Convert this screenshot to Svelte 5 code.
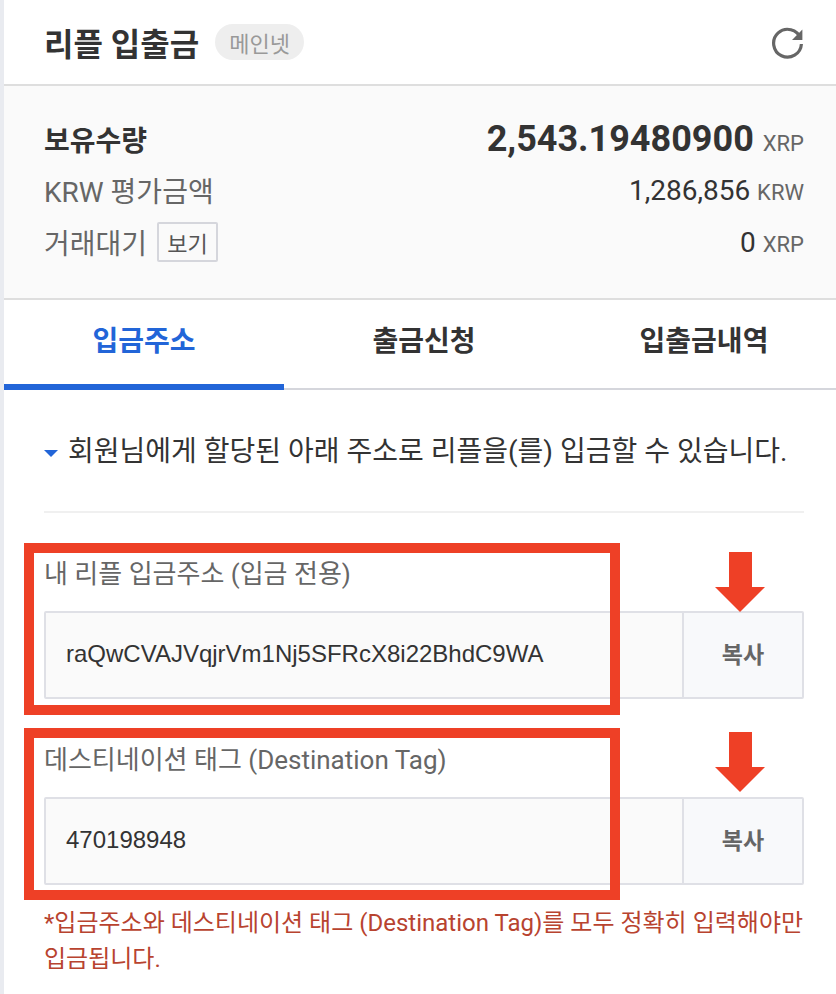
<script>
  const tabs = ['입금주소', '출금신청', '입출금내역'];
  const fields = [
    { label: '내 리플 입금주소 (입금 전용)', value: 'raQwCVAJVqjrVm1Nj5SFRcX8i22BhdC9WA' },
    { label: '데스티네이션 태그 (Destination Tag)', value: '470198948' }
  ];
</script>

<div class="page">
  <header class="head">
    <h1>리플 입출금</h1>
    <span class="pill">메인넷</span>
    <svg class="refresh" viewBox="0 0 36 36" width="36" height="36" aria-hidden="true">
      <path d="M30.6 14.5A13.9 13.9 0 1 0 31.4 20" fill="none" stroke="#666" stroke-width="3.2"/>
      <path d="M32.4 5.6V16H22z" fill="#666"/>
    </svg>
  </header>

  <section class="summary">
    <div class="row first">
      <span class="k strong">보유수량</span>
      <span class="v"><b>2,543.19480900</b> <small>XRP</small></span>
    </div>
    <div class="row second">
      <span class="k">KRW 평가금액</span>
      <span class="v"><em>1,286,856</em> <small>KRW</small></span>
    </div>
    <div class="row third">
      <span class="k">거래대기 <button class="see">보기</button></span>
      <span class="v"><em>0</em> <small>XRP</small></span>
    </div>
  </section>

  <nav class="tabs">
    {#each tabs as t, i}
      <div class="tab" class:on={i === 0}>{t}</div>
    {/each}
  </nav>

  <main class="body">
    <p class="notice"><i class="tri"></i>회원님에게 할당된 아래 주소로 리플을(를) 입금할 수 있습니다.</p>
    <hr />
    {#each fields as f}
      <div class="field">
        <div class="lab">{f.label}</div>
        <div class="box">
          <div class="val">{f.value}</div>
          <button class="copy">복사</button>
        </div>
        <div class="mark"></div>
        <svg class="arrow" viewBox="0 0 52 62" width="52" height="62" aria-hidden="true">
          <path d="M15 0H38V35H51L26 60 1 35H15z" fill="#ee4026"/>
        </svg>
      </div>
    {/each}
    <p class="warn">*입금주소와 데스티네이션 태그 (Destination Tag)를 모두 정확히 입력해야만 입금됩니다.</p>
  </main>
</div>

<style>
  :global(body) {
    margin: 0;
    background: #fff;
  }
  .page {
    width: 832px;
    height: 994px;
    border-left: 4px solid #e9ebf0;
    background: #fff;
    overflow: hidden;
    font-family: Roboto, "Noto Sans CJK KR", sans-serif;
    color: #333;
  }
  .head {
    height: 84px;
    display: flex;
    align-items: center;
    padding: 0 30px 0 40px;
    border-bottom: 2px solid #dedede;
  }
  h1 {
    margin: 0;
    font-size: 32px;
    font-weight: 700;
    color: #333;
  }
  .pill {
    margin-left: 16px;
    width: 89px;
    height: 36px;
    border-radius: 18px;
    background: #eeeeee;
    color: #999;
    font-size: 22px;
    display: flex;
    align-items: center;
    justify-content: center;
  }
  .refresh {
    margin-left: auto;
  }
  .summary {
    height: 214px;
    box-sizing: border-box;
    padding: 33px 32px 0 40px;
    background: #fafafa;
    border-bottom: 2px solid #dedede;
  }
  .row {
    display: flex;
    justify-content: space-between;
    align-items: center;
  }
  .first { height: 40px; }
  .second { height: 52px; margin-top: 5px; }
  .third { height: 52px; }
  .k {
    font-size: 28px;
    color: #666;
    display: flex;
    align-items: center;
  }
  .strong {
    font-weight: 700;
    color: #333;
  }
  .v b {
    font-size: 36px;
    font-weight: 700;
    color: #333;
  }
  .first .v small {
    margin-left: 5px;
  }
  .v em {
    font-style: normal;
    font-size: 28px;
    color: #333;
  }
  .v small {
    font-size: 22px;
    color: #666;
    margin-left: 3px;
  }
  .see {
    margin-left: 10px;
    width: 61px;
    height: 40px;
    padding: 0;
    border: 2px solid #d5d6dc;
    border-radius: 2px;
    background: #fafafa;
    color: #555;
    font: 22px Roboto, "Noto Sans CJK KR", sans-serif;
  }
  .tabs {
    display: flex;
    height: 90px;
    box-sizing: border-box;
    border-bottom: 2px solid #d5d6dc;
  }
  .tab {
    flex: 0 0 280px;
    height: 88px;
    box-sizing: border-box;
    padding-bottom: 10px;
    display: flex;
    align-items: center;
    justify-content: center;
    font-size: 28px;
    font-weight: 700;
    color: #333;
  }
  .tab.on {
    height: 90px;
    padding-bottom: 6px;
    color: #2265d8;
    border-bottom: 6px solid #2265d8;
  }
  .body {
    padding: 0 32px 0 40px;
  }
  .notice {
    margin: 0;
    height: 121px;
    box-sizing: border-box;
    padding-top: 43px;
    font-size: 28px;
    line-height: 38px;
    color: #333;
    white-space: nowrap;
    display: flex;
    align-items: flex-start;
  }
  .tri {
    flex: none;
    width: 0;
    height: 0;
    margin: 17px 10px 0 0;
    border-left: 7px solid transparent;
    border-right: 7px solid transparent;
    border-top: 7px solid #2265d8;
  }
  hr {
    margin: 0;
    border: 0;
    height: 2px;
    background: #f0f0f0;
  }
  .field {
    position: relative;
    padding-top: 42px;
    height: 186px;
    box-sizing: border-box;
  }
  .lab {
    font-size: 26px;
    line-height: 38px;
    color: #666;
    white-space: nowrap;
  }
  .box {
    margin-top: 18px;
    height: 88px;
    box-sizing: border-box;
    display: flex;
    border: 2px solid #dfe0e6;
    border-radius: 2px;
    background: #fafafa;
  }
  .val {
    flex: 1;
    padding: 0 0 2px 20px;
    display: flex;
    align-items: center;
    font-family: "Liberation Sans", Arial, sans-serif;
    font-size: 24px;
    color: #333;
  }
  .copy {
    width: 120px;
    padding: 0 0 5px;
    border: 0;
    border-left: 2px solid #dfe0e6;
    background: #f8f9fb;
    color: #666;
    font: 700 23px Roboto, "Noto Sans CJK KR", sans-serif;
  }
  .mark {
    position: absolute;
    left: -20px;
    top: 30px;
    width: 596px;
    height: 172px;
    box-sizing: border-box;
    border: 10px solid #ee4026;
    pointer-events: none;
  }
  .field:nth-of-type(2) .mark { top: 29px; }
  .arrow {
    position: absolute;
    left: 670px;
    top: 39px;
  }
  .field:nth-of-type(2) .arrow { top: 33px; }
  .warn {
    margin: 20px 0 0;
    font-size: 24px;
    line-height: 36px;
    color: #b8432f;
  }
</style>
